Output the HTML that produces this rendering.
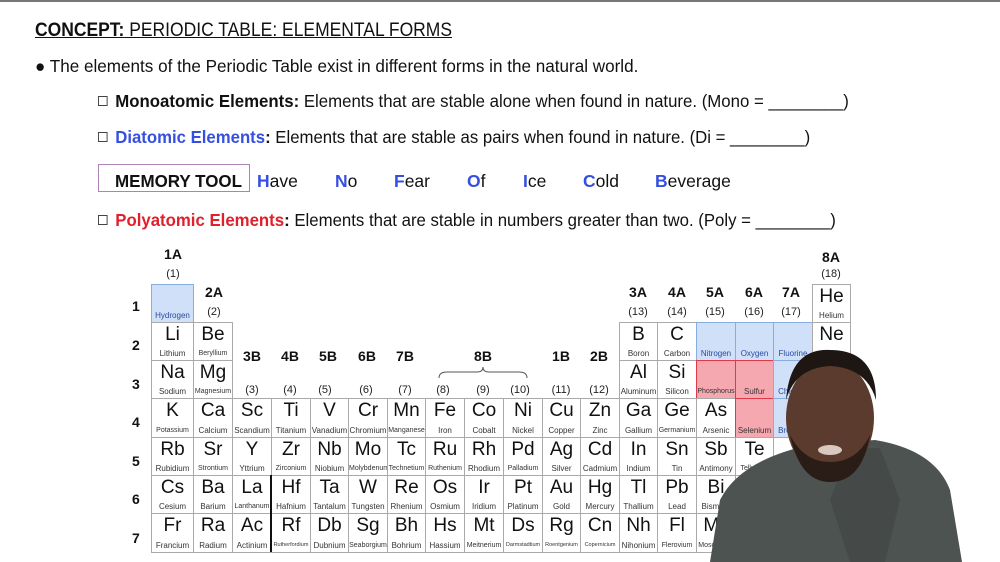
<!DOCTYPE html>
<html><head><meta charset="utf-8">
<style>
body{margin:0;width:1000px;height:562px;overflow:hidden;background:#fff;font-family:"Liberation Sans",Arial,sans-serif;position:relative;color:#111}
.t{position:absolute;white-space:nowrap;transform-origin:0 50%}
.topbar{position:absolute;left:0;top:0;width:1000px;height:2px;background:#777}
.cb{display:inline-block;width:8px;height:8px;border:1px solid #444;margin-right:8px;vertical-align:1px}
.b{color:#3550e0}
.cell{position:absolute;border:1px solid #aaa;box-sizing:border-box;background:#fff;text-align:center;overflow:hidden}
.cell .s{position:absolute;left:0;right:0;top:1px;font-size:19px;line-height:22px}
.cell .n{position:absolute;left:0;right:0;bottom:2px;font-size:8px;line-height:9px;color:#333;white-space:nowrap}
.lbl{position:absolute;font-weight:bold;font-size:14px;transform:translateX(-50%)}
.num{position:absolute;font-size:11px;color:#222;transform:translateX(-50%)}
</style></head><body>
<div class="topbar"></div>
<div class="t" style="left:35px;top:20px;font-size:19px;text-decoration:underline;transform:scaleX(0.92)"><b>CONCEPT:</b> PERIODIC TABLE: ELEMENTAL FORMS</div>
<div class="t" style="left:35px;top:56px;font-size:17.5px;transform:scaleX(0.977)">● The elements of the Periodic Table exist in different forms in the natural world.</div>
<div class="t" style="left:98px;top:91px;font-size:17.5px;transform:scaleX(0.96)"><span class="cb"></span><b>Monoatomic Elements:</b> Elements that are stable alone when found in nature. (Mono = ________)</div>
<div class="t" style="left:98px;top:127px;font-size:17.5px;transform:scaleX(0.957)"><span class="cb"></span><b class="b">Diatomic Elements</b><b>:</b> Elements that are stable as pairs when found in nature. (Di = ________)</div>
<div class="t" style="left:98px;top:164px;width:152px;height:28px;border:1px solid #b080b8;box-sizing:border-box"></div>
<div class="t" style="left:115px;top:171px;font-size:17.5px;font-weight:bold;transform:scaleX(0.97)">MEMORY TOOL</div>
<div class="t" style="left:257px;top:171px;font-size:17.5px"><b class="b">H</b>ave</div>
<div class="t" style="left:335px;top:171px;font-size:17.5px"><b class="b">N</b>o</div>
<div class="t" style="left:394px;top:171px;font-size:17.5px"><b class="b">F</b>ear</div>
<div class="t" style="left:467px;top:171px;font-size:17.5px"><b class="b">O</b>f</div>
<div class="t" style="left:523px;top:171px;font-size:17.5px"><b class="b">I</b>ce</div>
<div class="t" style="left:583px;top:171px;font-size:17.5px"><b class="b">C</b>old</div>
<div class="t" style="left:655px;top:171px;font-size:17.5px"><b class="b">B</b>everage</div>
<div class="t" style="left:98px;top:210px;font-size:17.5px;transform:scaleX(0.959)"><span class="cb"></span><b style="color:#e0202a">Polyatomic Elements</b><b>:</b> Elements that are stable in numbers greater than two. (Poly = ________)</div>
<div id="pt"></div>
<svg style="position:absolute;left:437px;top:366px" width="92" height="14"><path d="M2 12 Q2 6 10 6 L40 6 Q46 6 46 1 Q46 6 52 6 L82 6 Q90 6 90 12" fill="none" stroke="#555" stroke-width="1"/></svg>
<div style="position:absolute;left:270px;top:475px;width:2px;height:77px;background:#111"></div>
<svg style="position:absolute;left:700px;top:340px" width="300" height="222">
<path d="M10 222 L20 160 Q40 120 110 105 L175 100 Q235 110 250 150 L262 222 Z" fill="#4d5350"/>
<path d="M150 108 L130 160 L150 222 L185 222 L200 160 L180 108 Z" fill="#454a48"/>
<ellipse cx="130" cy="78" rx="44" ry="58" fill="#5b3b2d"/>
<path d="M86 60 Q90 8 130 10 Q176 10 176 60 Q167 28 130 26 Q95 28 86 60Z" fill="#1e1612"/>
<path d="M90 95 Q100 142 130 142 Q162 142 170 95 Q157 122 130 122 Q104 122 90 95Z" fill="#2a1d17"/>
<ellipse cx="130" cy="110" rx="12" ry="5" fill="#d8c8c0"/>
</svg>
<script>
const L=[151,193,232,271,310,348,387,425,464,503,542,580,619,657,696,735,773,812,850];
const T=[284,322,360,398,437,475,513,552];
const rows=[
[[0,'','Hydrogen','b'],[17,'He','Helium']],
[[0,'Li','Lithium'],[1,'Be','Beryllium'],[12,'B','Boron'],[13,'C','Carbon'],[14,'','Nitrogen','b'],[15,'','Oxygen','b'],[16,'','Fluorine','b'],[17,'Ne','Neon']],
[[0,'Na','Sodium'],[1,'Mg','Magnesium'],[12,'Al','Aluminum'],[13,'Si','Silicon'],[14,'','Phosphorus','r'],[15,'','Sulfur','r'],[16,'','Chlorine','b']],
'K Potassium,Ca Calcium,Sc Scandium,Ti Titanium,V Vanadium,Cr Chromium,Mn Manganese,Fe Iron,Co Cobalt,Ni Nickel,Cu Copper,Zn Zinc,Ga Gallium,Ge Germanium,As Arsenic,_ Selenium r,_ Bromine b',
'Rb Rubidium,Sr Strontium,Y Yttrium,Zr Zirconium,Nb Niobium,Mo Molybdenum,Tc Technetium,Ru Ruthenium,Rh Rhodium,Pd Palladium,Ag Silver,Cd Cadmium,In Indium,Sn Tin,Sb Antimony,Te Tellurium',
'Cs Cesium,Ba Barium,La Lanthanum,Hf Hafnium,Ta Tantalum,W Tungsten,Re Rhenium,Os Osmium,Ir Iridium,Pt Platinum,Au Gold,Hg Mercury,Tl Thallium,Pb Lead,Bi Bismuth',
'Fr Francium,Ra Radium,Ac Actinium,Rf Rutherfordium,Db Dubnium,Sg Seaborgium,Bh Bohrium,Hs Hassium,Mt Meitnerium,Ds Darmstadtium,Rg Roentgenium,Cn Copernicium,Nh Nihonium,Fl Flerovium,Mc Moscovium'];
let h='';
rows.forEach((r,ri)=>{
 let arr=typeof r==='string'?r.split(',').map((x,i)=>{let p=x.split(' ');return [i,p[0]=='_'?'':p[0],p[1],p[2]]}):r;
 arr.forEach(([c,s,n,k])=>{
  let bg=k=='b'?'background:#cfe0f8;border-color:#86aee0;':k=='r'?'background:#f5a8b0;border-color:#e03848;':'';
  let fs=n.length>10?5.5:n.length>8?7:8;
  h+=`<div class="cell" style="left:${L[c]}px;top:${T[ri]}px;width:${L[c+1]-L[c]+1}px;height:${T[ri+1]-T[ri]+1}px;${bg}"><div class="s">${s}</div><div class="n" style="font-size:${fs}px;${k=='b'?'color:#2a4aa0':''}">${n}</div></div>`;
 });
});
const lab=[['1A',173,246],['2A',214,284],['3B',252,348],['4B',290,348],['5B',328,348],['6B',367,348],['7B',405,348],['8B',483,348],['1B',561,348],['2B',599,348],['3A',638,284],['4A',677,284],['5A',715,284],['6A',754,284],['7A',791,284],['8A',831,249]];
lab.forEach(([t,x,y])=>h+=`<div class="lbl" style="left:${x}px;top:${y}px">${t}</div>`);
const nums=[['(1)',173,268],['(2)',214,306],['(3)',252,384],['(4)',290,384],['(5)',325,384],['(6)',366,384],['(7)',405,384],['(8)',443,384],['(9)',483,384],['(10)',520,384],['(11)',561,384],['(12)',599,384],['(13)',638,306],['(14)',677,306],['(15)',715,306],['(16)',754,306],['(17)',791,306],['(18)',831,268]];
nums.forEach(([t,x,y])=>h+=`<div class="num" style="left:${x}px;top:${y}px">${t}</div>`);
[306,345,384,422,461,499,538].forEach((y,i)=>h+=`<div class="t" style="left:132px;top:${y-8}px;font-size:14px;font-weight:bold">${i+1}</div>`);
document.getElementById('pt').innerHTML=h;
</script>
</body></html>
